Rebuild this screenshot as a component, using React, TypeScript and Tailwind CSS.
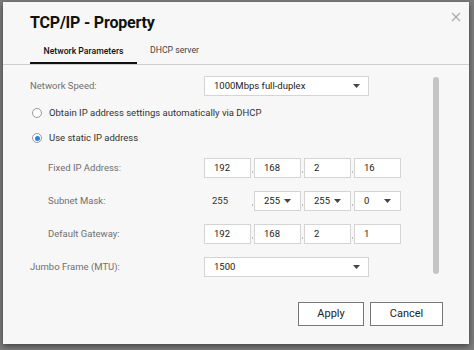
import type { JSX } from "react";

const Arrow = (): JSX.Element => (
  <svg width="7" height="4" viewBox="0 0 7 4" className="shrink-0">
    <path d="M0 0 L7 0 L3.5 4 Z" fill="#444" />
  </svg>
);

const Box = ({ value, drop = false }: { value: string; drop?: boolean }): JSX.Element => (
  <div className="w-[47px] h-[20px] bg-white border border-[#d4d4d4] flex items-center justify-between pl-[9px] pr-[9px] text-[9.5px] text-[#222]">
    <span>{value}</span>
    {drop && <Arrow />}
  </div>
);

const Dot = (): JSX.Element => (
  <div className="w-[3px] h-[20px] flex items-end justify-center pb-[5px]">
    <div className="w-[1.5px] h-[2px] bg-[#bbb]" />
  </div>
);

const IpRow = ({ label, values, first, drops }: { label: string; values: string[]; first?: string; drops?: boolean }): JSX.Element => (
  <div className="flex items-center h-[20px]">
    <div className="w-[174px] pl-[18px] text-[9.5px] text-[#707070]">{label}</div>
    <div className="flex items-center">
      {first ? (
        <div className="w-[47px] pl-[8px] text-[9.5px] text-[#333]">{first}</div>
      ) : (
        <Box value={values[0]} />
      )}
      <Dot />
      <Box value={values[1]} drop={drops} />
      <Dot />
      <Box value={values[2]} drop={drops} />
      <Dot />
      <Box value={values[3]} drop={drops} />
    </div>
  </div>
);

const Radio = ({ checked }: { checked?: boolean }): JSX.Element => (
  <div className="w-[10px] h-[10px] rounded-full border border-[#9a9a9a] bg-white flex items-center justify-center">
    {checked && <div className="w-[5px] h-[5px] rounded-full bg-[#2f7fe0]" />}
  </div>
);

const App = (): JSX.Element => {
  return (
    <div className="w-[474px] h-[350px] bg-[#7d7d7d] pt-[2px] pl-[3px]" style={{ fontFamily: "Roboto, 'Liberation Sans', sans-serif" }}>
      <div className="relative w-[466px] h-[342px] bg-[#f7f7f7] shadow-[0_2px_6px_rgba(0,0,0,0.5)] flex flex-col">
        {/* Close button */}
        <svg className="absolute right-[8px] top-[10px]" width="10" height="10" viewBox="0 0 10 10">
          <path d="M1 1 L9 9 M9 1 L1 9" stroke="#aaa" strokeWidth="1.2" />
        </svg>

        {/* Title */}
        <div className="pl-[27px] pt-[10px] text-[16px] tracking-[-0.2px] font-bold text-[#111] leading-[22px]">TCP/IP - Property</div>

        {/* Tabs */}
        <div className="mt-[6px] border-b border-[#cfcfcf] flex pl-[27px] h-[25px] items-end">
          <div className="w-[107px] h-full flex items-center justify-center text-[8.7px] font-medium text-[#111] border-b-2 border-[#111] pt-[2px]">
            Network Parameters
          </div>
          <div className="ml-[13px] h-full flex items-center text-[8.7px] text-[#444] pb-[2px]">DHCP server</div>
        </div>

        {/* Body */}
        <div className="flex flex-1">
          <div className="flex-1 pl-[27px] pt-[11px] flex flex-col">
            <div className="flex items-center h-[20px]">
              <div className="w-[174px] text-[9.5px] text-[#707070]">Network Speed:</div>
              <div className="w-[165px] h-[20px] bg-white border border-[#d4d4d4] flex items-center justify-between pl-[9px] pr-[8px] text-[9.5px] text-[#222]">
                <span>1000Mbps full-duplex</span>
                <Arrow />
              </div>
            </div>
            <div className="flex items-center gap-[7px] mt-[7px] h-[20px] pl-[2px]">
              <Radio />
              <span className="text-[9.5px] text-[#333]">Obtain IP address settings automatically via DHCP</span>
            </div>
            <div className="flex items-center gap-[7px] mt-[5px] h-[20px] pl-[2px]">
              <Radio checked />
              <span className="text-[9.5px] text-[#333]">Use static IP address</span>
            </div>
            <div className="mt-[10px] flex flex-col gap-[13px]">
              <IpRow label="Fixed IP Address:" values={["192", "168", "2", "16"]} />
              <IpRow label="Subnet Mask:" first="255" values={["255", "255", "255", "0"]} drops />
              <IpRow label="Default Gateway:" values={["192", "168", "2", "1"]} />
            </div>
            <div className="flex items-center h-[20px] mt-[13px]">
              <div className="w-[174px] text-[9.5px] text-[#707070]">Jumbo Frame (MTU):</div>
              <div className="w-[165px] h-[20px] bg-white border border-[#d4d4d4] flex items-center justify-between pl-[9px] pr-[8px] text-[9.5px] text-[#222]">
                <span>1500</span>
                <Arrow />
              </div>
            </div>
          </div>
          {/* Scrollbar */}
          <div className="w-[6px] mr-[30px] mt-[12px] h-[197px] rounded-full bg-[#c4c4c4]" />
        </div>

        {/* Footer */}
        <div className="flex justify-end gap-[6px] pr-[26px] pb-[18px]">
          <button className="w-[66px] h-[24px] bg-white border border-[#777] text-[11px] text-[#222]">Apply</button>
          <button className="w-[73px] h-[24px] bg-white border border-[#777] text-[11px] text-[#222]">Cancel</button>
        </div>
      </div>
    </div>
  );
};

export default App;
